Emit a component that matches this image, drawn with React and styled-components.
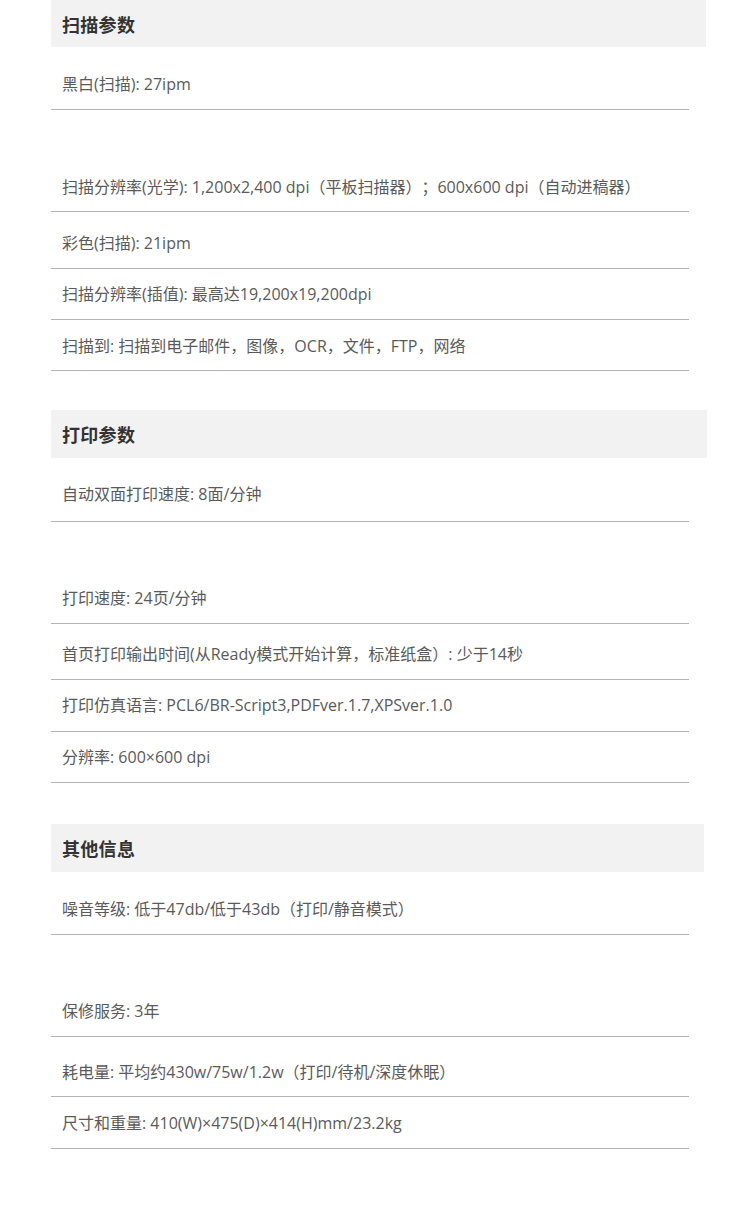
import React from "react";
import styled, { createGlobalStyle } from "styled-components";

const Global = createGlobalStyle`
  html, body { margin: 0; padding: 0; background: #fff; }
  body { font-family: "Open Sans", "Noto Sans CJK SC", sans-serif; }
`;

const Page = styled.div`
  padding: 0 0 40px 51px;
  display: flex;
  flex-direction: column;
`;

const Section = styled.section`
  display: flex;
  flex-direction: column;
  margin-top: ${(p) => p.$mt}px;
`;

const Header = styled.h2`
  margin: 0;
  box-sizing: border-box;
  width: ${(p) => p.$w}px;
  height: ${(p) => p.$h}px;
  padding-left: 11px;
  display: flex;
  align-items: center;
  background: #f2f2f2;
  color: #333;
  font-family: "Noto Sans CJK SC", sans-serif;
  font-size: 18px;
  font-weight: 700;
  letter-spacing: 0.3px;
`;

const Row = styled.div`
  box-sizing: border-box;
  width: 638px;
  padding: ${(p) => p.$pt}px 0 ${(p) => p.$pb}px 11px;
  border-bottom: 1px solid #b4b4b4;
  color: #5a5a5a;
  font-size: 16px;
  line-height: 20px;
  white-space: nowrap;
  text-spacing-trim: space-all;
`;

const sections = [
  {
    title: "扫描参数",
    mt: 0,
    w: 655,
    h: 47,
    rows: [
      ["黑白(扫描): 27ipm", 27, 15],
      ["扫描分辨率(光学): 1,200x2,400 dpi（平板扫描器）；600x600 dpi（自动进稿器）", 67, 14],
      ["彩色(扫描): 21ipm", 21, 15],
      ["扫描分辨率(插值): 最高达19,200x19,200dpi", 15, 15],
      ["扫描到: 扫描到电子邮件，图像，OCR，文件，FTP，网络", 16, 14],
    ],
  },
  {
    title: "打印参数",
    mt: 39,
    w: 656,
    h: 48,
    rows: [
      ["自动双面打印速度: 8面/分钟", 26, 17],
      ["打印速度: 24页/分钟", 66, 15],
      ["首页打印输出时间(从Ready模式开始计算，标准纸盒）: 少于14秒", 20, 15],
      ["打印仿真语言: PCL6/BR-Script3,PDFver.1.7,XPSver.1.0", 15, 16],
      ["分辨率: 600×600 dpi", 15, 15],
    ],
  },
  {
    title: "其他信息",
    mt: 41,
    w: 653,
    h: 48,
    rows: [
      ["噪音等级: 低于47db/低于43db（打印/静音模式）", 27, 15],
      ["保修服务: 3年", 66, 15],
      ["耗电量: 平均约430w/75w/1.2w（打印/待机/深度休眠）", 25, 14],
      ["尺寸和重量: 410(W)×475(D)×414(H)mm/23.2kg", 16, 15],
    ],
  },
];

export default function App() {
  return (
    <>
      <Global />
      <Page>
        {sections.map((s) => (
          <Section key={s.title} $mt={s.mt}>
            <Header $w={s.w} $h={s.h}>{s.title}</Header>
            {s.rows.map(([text, pt, pb]) => (
              <Row key={text} $pt={pt} $pb={pb}>
                {text}
              </Row>
            ))}
          </Section>
        ))}
      </Page>
    </>
  );
}
